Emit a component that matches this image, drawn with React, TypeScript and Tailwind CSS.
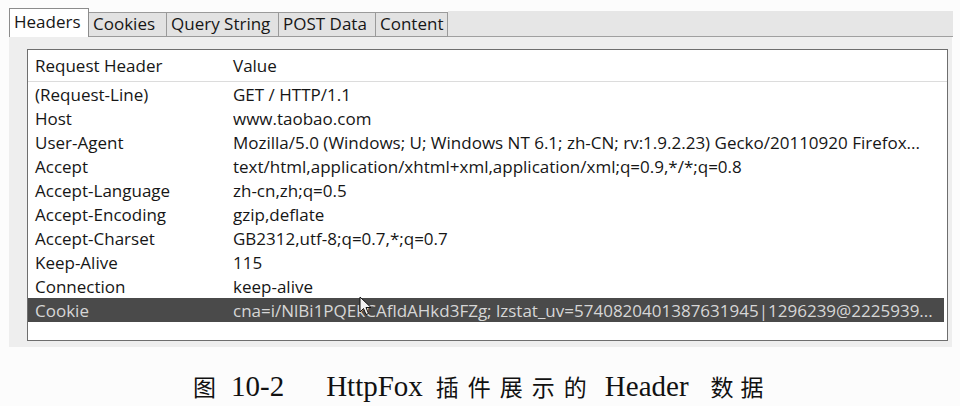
import React from 'react';

interface HeaderRow {
  name: string;
  value: string;
  selected?: boolean;
}

const rows: HeaderRow[] = [
  { name: '(Request-Line)', value: 'GET / HTTP/1.1' },
  { name: 'Host', value: 'www.taobao.com' },
  {
    name: 'User-Agent',
    value: 'Mozilla/5.0 (Windows; U; Windows NT 6.1; zh-CN; rv:1.9.2.23) Gecko/20110920 Firefox...',
  },
  { name: 'Accept', value: 'text/html,application/xhtml+xml,application/xml;q=0.9,*/*;q=0.8' },
  { name: 'Accept-Language', value: 'zh-cn,zh;q=0.5' },
  { name: 'Accept-Encoding', value: 'gzip,deflate' },
  { name: 'Accept-Charset', value: 'GB2312,utf-8;q=0.7,*;q=0.7' },
  { name: 'Keep-Alive', value: '115' },
  { name: 'Connection', value: 'keep-alive' },
  {
    name: 'Cookie',
    value: 'cna=i/NlBi1PQEkCAfldAHkd3FZg; lzstat_uv=5740820401387631945|1296239@2225939...',
    selected: true,
  },
];

const tabs = ['Cookies', 'Query String', 'POST Data', 'Content'];
const tabWidths = ['w-[79px]', 'w-[113px]', 'w-[98px]', 'w-[73px]'];

const App: React.FC = () => {
  return (
    <div className="relative w-[960px] h-[406px] bg-[#fcfcfc] font-['Open_Sans',sans-serif] text-[#161616] overflow-hidden">
      {/* Tab strip */}
      <div className="flex items-end pl-[9px] pt-[8px] h-[37px]">
        <div className="w-[80px] h-[29px] bg-white border border-b-0 border-[#8c8c8c] pl-[4px] pt-[2px] text-[17px] leading-[22px] relative z-10 whitespace-nowrap">
          Headers
        </div>
        {tabs.map((t, i) => (
          <div
            key={t}
            className={`${tabWidths[i]} h-[25px] -ml-px bg-[#e2e2e2] border border-[#9a9a9a] pl-[4px] text-[17px] leading-[22px] whitespace-nowrap overflow-hidden`}
          >
            {t}
          </div>
        ))}
        <div className="w-[505px] h-[26px] bg-[#e6e6e6] border-b border-[#a0a0a0]" />
      </div>

      {/* Panel */}
      <div className="ml-[9px] -mt-px w-[943px] h-[311px] bg-[#eeeeee] border-t border-[#9a9a9a] pl-[18px] pt-[12px]">
        <div className="w-[921px] h-[292px] bg-white border border-[#6e6e6e] text-[17px]">
          <div className="grid grid-cols-[198px_1fr] pl-[7px] h-[32px] pt-[1px] items-center border-b border-[#dcdcdc]">
            <span>Request Header</span>
            <span>Value</span>
          </div>
          {rows.map((r) => (
            <div
              key={r.name}
              className={`grid grid-cols-[198px_1fr] pl-[7px] h-[24px] items-center mr-[3px] whitespace-nowrap overflow-hidden ${
                r.selected ? 'bg-[#4a4a4a] text-[#d6d6d6]' : ''
              }`}
            >
              <span>{r.name}</span>
              <span className="overflow-hidden">{r.value}</span>
            </div>
          ))}
        </div>
      </div>

      {/* Mouse pointer over the selected row */}
      <svg
        className="absolute left-[359px] top-[296px]"
        width="14"
        height="21"
        viewBox="0 0 14 21"
      >
        <path
          d="M1 1 L1 16 L4.5 12.5 L7 18.5 L9.5 17.5 L7 11.5 L12 11.5 Z"
          fill="#f2f2f2"
          stroke="#111"
          strokeWidth="1"
        />
      </svg>

      {/* Caption */}
      <div className="flex items-baseline pl-[193px] mt-[18px] font-['Liberation_Serif','Noto_Sans_CJK_SC',serif] text-[#111]">
        <span className="text-[23px]">图</span>
        <span className="text-[29px] ml-[15px]">10-2</span>
        <span className="text-[29px] ml-[42px]">HttpFox</span>
        <span className="text-[23px] ml-[13px] tracking-[9px]">插件展示的</span>
        <span className="text-[29px] ml-[9px]">Header</span>
        <span className="text-[23px] ml-[22px] tracking-[7px]">数据</span>
      </div>
    </div>
  );
};

export default App;
